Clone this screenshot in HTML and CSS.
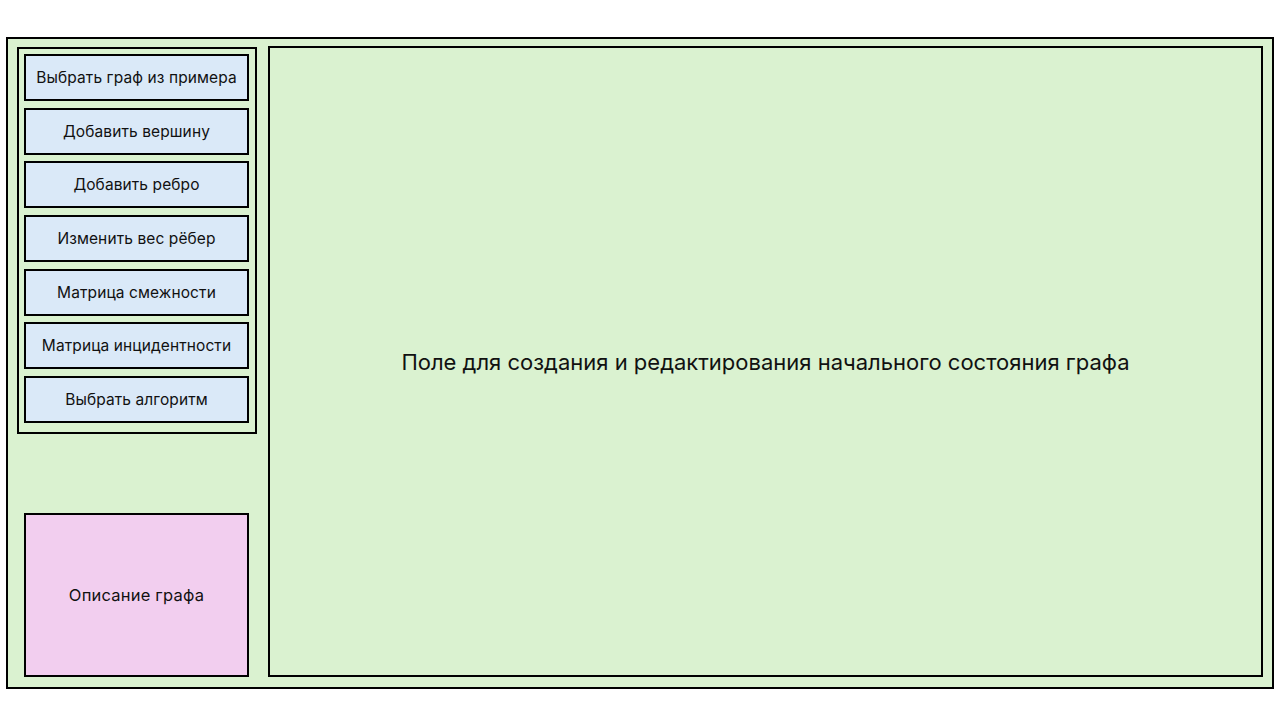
FILE: index.html
```html
<!DOCTYPE html>
<html lang="ru">
<head>
<meta charset="utf-8">
<title>Редактор графа</title>
<link rel="stylesheet" href="styles.css">
</head>
<body>
<div class="frame">
  <div class="side">
    <div class="menu">
      <div class="btn">Выбрать граф из примера</div>
      <div class="btn">Добавить вершину</div>
      <div class="btn">Добавить ребро</div>
      <div class="btn">Изменить вес рёбер</div>
      <div class="btn">Матрица смежности</div>
      <div class="btn">Матрица инцидентности</div>
      <div class="btn">Выбрать алгоритм</div>
    </div>
    <div class="desc">Описание графа</div>
  </div>
  <div class="canvas">Поле для создания и редактирования начального состояния графа</div>
</div>
</body>
</html>
```
FILE: styles.css
```css
* { box-sizing: border-box; }
html, body { margin: 0; padding: 0; background: #fff; }
body {
  font-family: Inter, "Noto Sans", sans-serif;
  color: #111;
}
.frame {
  margin: 37px 0 0 6px;
  width: 1268px;
  height: 652px;
  border: 2px solid #000;
  background: #daf2d0;
  display: flex;
  padding: 7px 9px 10px 9px;
  gap: 11px;
}
.side {
  width: 240px;
  flex: none;
  display: flex;
  flex-direction: column;
  justify-content: space-between;
  padding-top: 1px;
}
.menu {
  border: 2px solid #000;
  padding: 5px 6px 9px 5px;
  display: flex;
  flex-direction: column;
  gap: 6.7px;
}
.btn {
  height: 47px;
  border: 2px solid #000;
  background: #dae9f8;
  display: flex;
  align-items: center;
  justify-content: center;
  font-size: 15.5px;
  letter-spacing: 0.1px;
}
.desc {
  margin-left: 7px;
  width: 225px;
  height: 164px;
  border: 2px solid #000;
  background: #f2ceef;
  display: flex;
  align-items: center;
  justify-content: center;
  font-size: 16.5px;
  letter-spacing: 0.2px;
}
.canvas {
  flex: 1;
  border: 2px solid #000;
  display: flex;
  align-items: center;
  justify-content: center;
  font-size: 22px;
}
```
